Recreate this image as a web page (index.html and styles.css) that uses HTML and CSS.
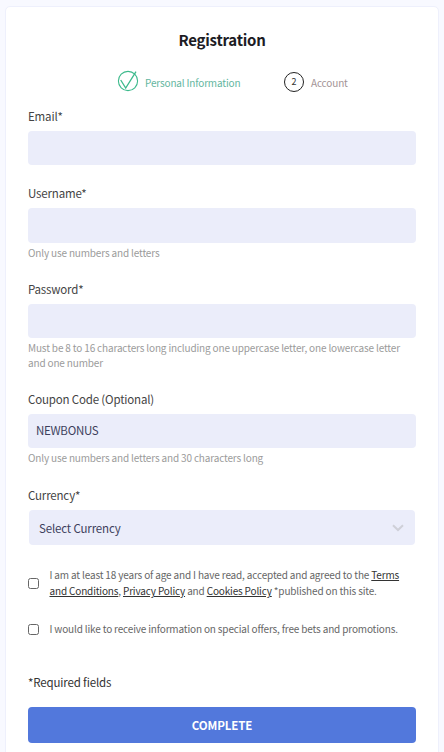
FILE: index.html
```html
<!DOCTYPE html>
<html lang="en">
<head>
<meta charset="utf-8">
<title>Registration</title>
<link rel="stylesheet" href="styles.css">
</head>
<body>
<main class="card">
  <h1 class="title">Registration</h1>
  <div class="steps">
    <div class="step step-done">
      <svg class="step-icon" viewBox="0 0 20 22" width="20" height="22" aria-hidden="true">
        <circle cx="10" cy="10" r="9.6" fill="none" stroke="#3dba8c" stroke-width="1.1"/>
        <path d="M2.7 9 L7.7 17 L18 0.6" fill="none" stroke="#3dba8c" stroke-width="1.3"/>
      </svg>
      <span>Personal Information</span>
    </div>
    <div class="step step-next">
      <span class="step-num">2</span>
      <span>Account</span>
    </div>
  </div>
  <form class="form">
    <div class="field field-email">
      <label class="label">Email*</label>
      <div class="input"></div>
    </div>
    <div class="field field-user">
      <label class="label">Username*</label>
      <div class="input input-tall"></div>
      <p class="hint">Only use numbers and letters</p>
    </div>
    <div class="field field-pass">
      <label class="label">Password*</label>
      <div class="input"></div>
      <p class="hint">Must be 8 to 16 characters long including one uppercase letter, one lowercase letter and one number</p>
    </div>
    <div class="field field-coupon">
      <label class="label">Coupon Code (Optional)</label>
      <div class="input">NEWBONUS</div>
      <p class="hint">Only use numbers and letters and 30 characters long</p>
    </div>
    <div class="field field-currency">
      <label class="label">Currency*</label>
      <div class="select">
        <span>Select Currency</span>
        <svg viewBox="0 0 12 8" width="12" height="8" aria-hidden="true"><path d="M1 1.2 L6 6 L11 1.2" fill="none" stroke="#cfd0d8" stroke-width="2"/></svg>
      </div>
    </div>
    <div class="check check-terms">
      <span class="box"></span>
      <p>I am at least 18 years of age and I have read, accepted and agreed to the <a href="#">Terms and Conditions</a>, <a href="#">Privacy Policy</a> and <a href="#">Cookies Policy</a> *published on this site.</p>
    </div>
    <div class="check check-offers">
      <span class="box"></span>
      <p>I would like to receive information on special offers, free bets and promotions.</p>
    </div>
    <p class="required">*Required fields</p>
    <button class="submit" type="button">COMPLETE</button>
  </form>
</main>
</body>
</html>
```
FILE: styles.css
```css
* { box-sizing: border-box; }
html, body { margin: 0; padding: 0; }
body {
  width: 444px;
  height: 752px;
  overflow: hidden;
  background: #f8f9ff;
  padding: 6px 5px 0 5px;
  font-family: "Noto Sans CJK SC", "Noto Sans", sans-serif;
  color: #333;
}
.card {
  width: 434px;
  height: 760px;
  background: #fff;
  border: 1px solid #eef0fc;
  border-radius: 5px;
  padding: 23px 22px 0;
}
.title {
  margin: 0;
  font-size: 15px;
  letter-spacing: -0.25px;
  line-height: 20px;
  font-weight: 700;
  color: #1c1c24;
  text-align: center;
}
.steps {
  display: flex;
  margin-top: 21px;
  padding-left: 90px;
  height: 22px;
  align-items: center;
  font-size: 10px;
  letter-spacing: -0.16px;
}
.step { display: flex; align-items: center; }
.step-done { color: #64b6a0; width: 166px; gap: 7px; }
.step-next { color: #a39396; gap: 7px; }
.step-icon { overflow: visible; }
.step-num {
  width: 20px;
  height: 20px;
  border: 1px solid #222;
  border-radius: 50%;
  color: #333;
  font-size: 9px;
  line-height: 17px;
  text-align: center;
}
.form { display: flex; flex-direction: column; }
.label {
  display: block;
  font-size: 11.5px;
  letter-spacing: -0.17px;
  line-height: 18px;
  color: #444;
}
.input {
  margin-top: 6px;
  height: 34px;
  background: #ebedfa;
  border-radius: 4px;
  padding-left: 8px;
  font-size: 11.5px;
  letter-spacing: -0.27px;
  line-height: 33px;
  color: #3d3f5c;
}
.input-tall { height: 35px; }
.hint {
  margin: 2px 0 0;
  font-size: 10px;
  letter-spacing: -0.16px;
  line-height: 15px;
  color: #9b9b9b;
}
.field-email { margin-top: 14px; }
.field-user { margin-top: 19px; }
.field-pass { margin-top: 20px; }
.field-coupon { margin-top: 20px; }
.field-currency { margin-top: 21px; }
.select {
  margin: 6px 1px 0;
  height: 35px;
  background: #ebedfa;
  border-radius: 4px;
  display: flex;
  align-items: center;
  justify-content: space-between;
  padding: 0 11px 0 10px;
  font-size: 11.5px;
  letter-spacing: -0.15px;
  color: #3d3f5c;
}
.check { display: flex; align-items: center; gap: 10.5px; }
.check p {
  margin: 0;
  font-size: 10px;
  letter-spacing: -0.16px;
  line-height: 16px;
  color: #666;
}
.check a { color: #333; text-decoration: underline; }
.box {
  flex: none;
  width: 11px;
  height: 11px;
  border: 1px solid #666;
  border-radius: 2.5px;
  background: #fff;
}
.check-terms { margin-top: 22px; }
.check-offers { margin-top: 22px; }
.required {
  margin: 36px 0 0;
  font-size: 11.5px;
  letter-spacing: -0.15px;
  line-height: 18px;
  color: #333;
}
.submit {
  margin-top: 16px;
  height: 36px;
  border: 0;
  border-radius: 4px;
  background: #5278dc;
  color: #fff;
  font: 700 11.5px "Noto Sans CJK SC", "Noto Sans", sans-serif;
  letter-spacing: -0.1px;
}
```
